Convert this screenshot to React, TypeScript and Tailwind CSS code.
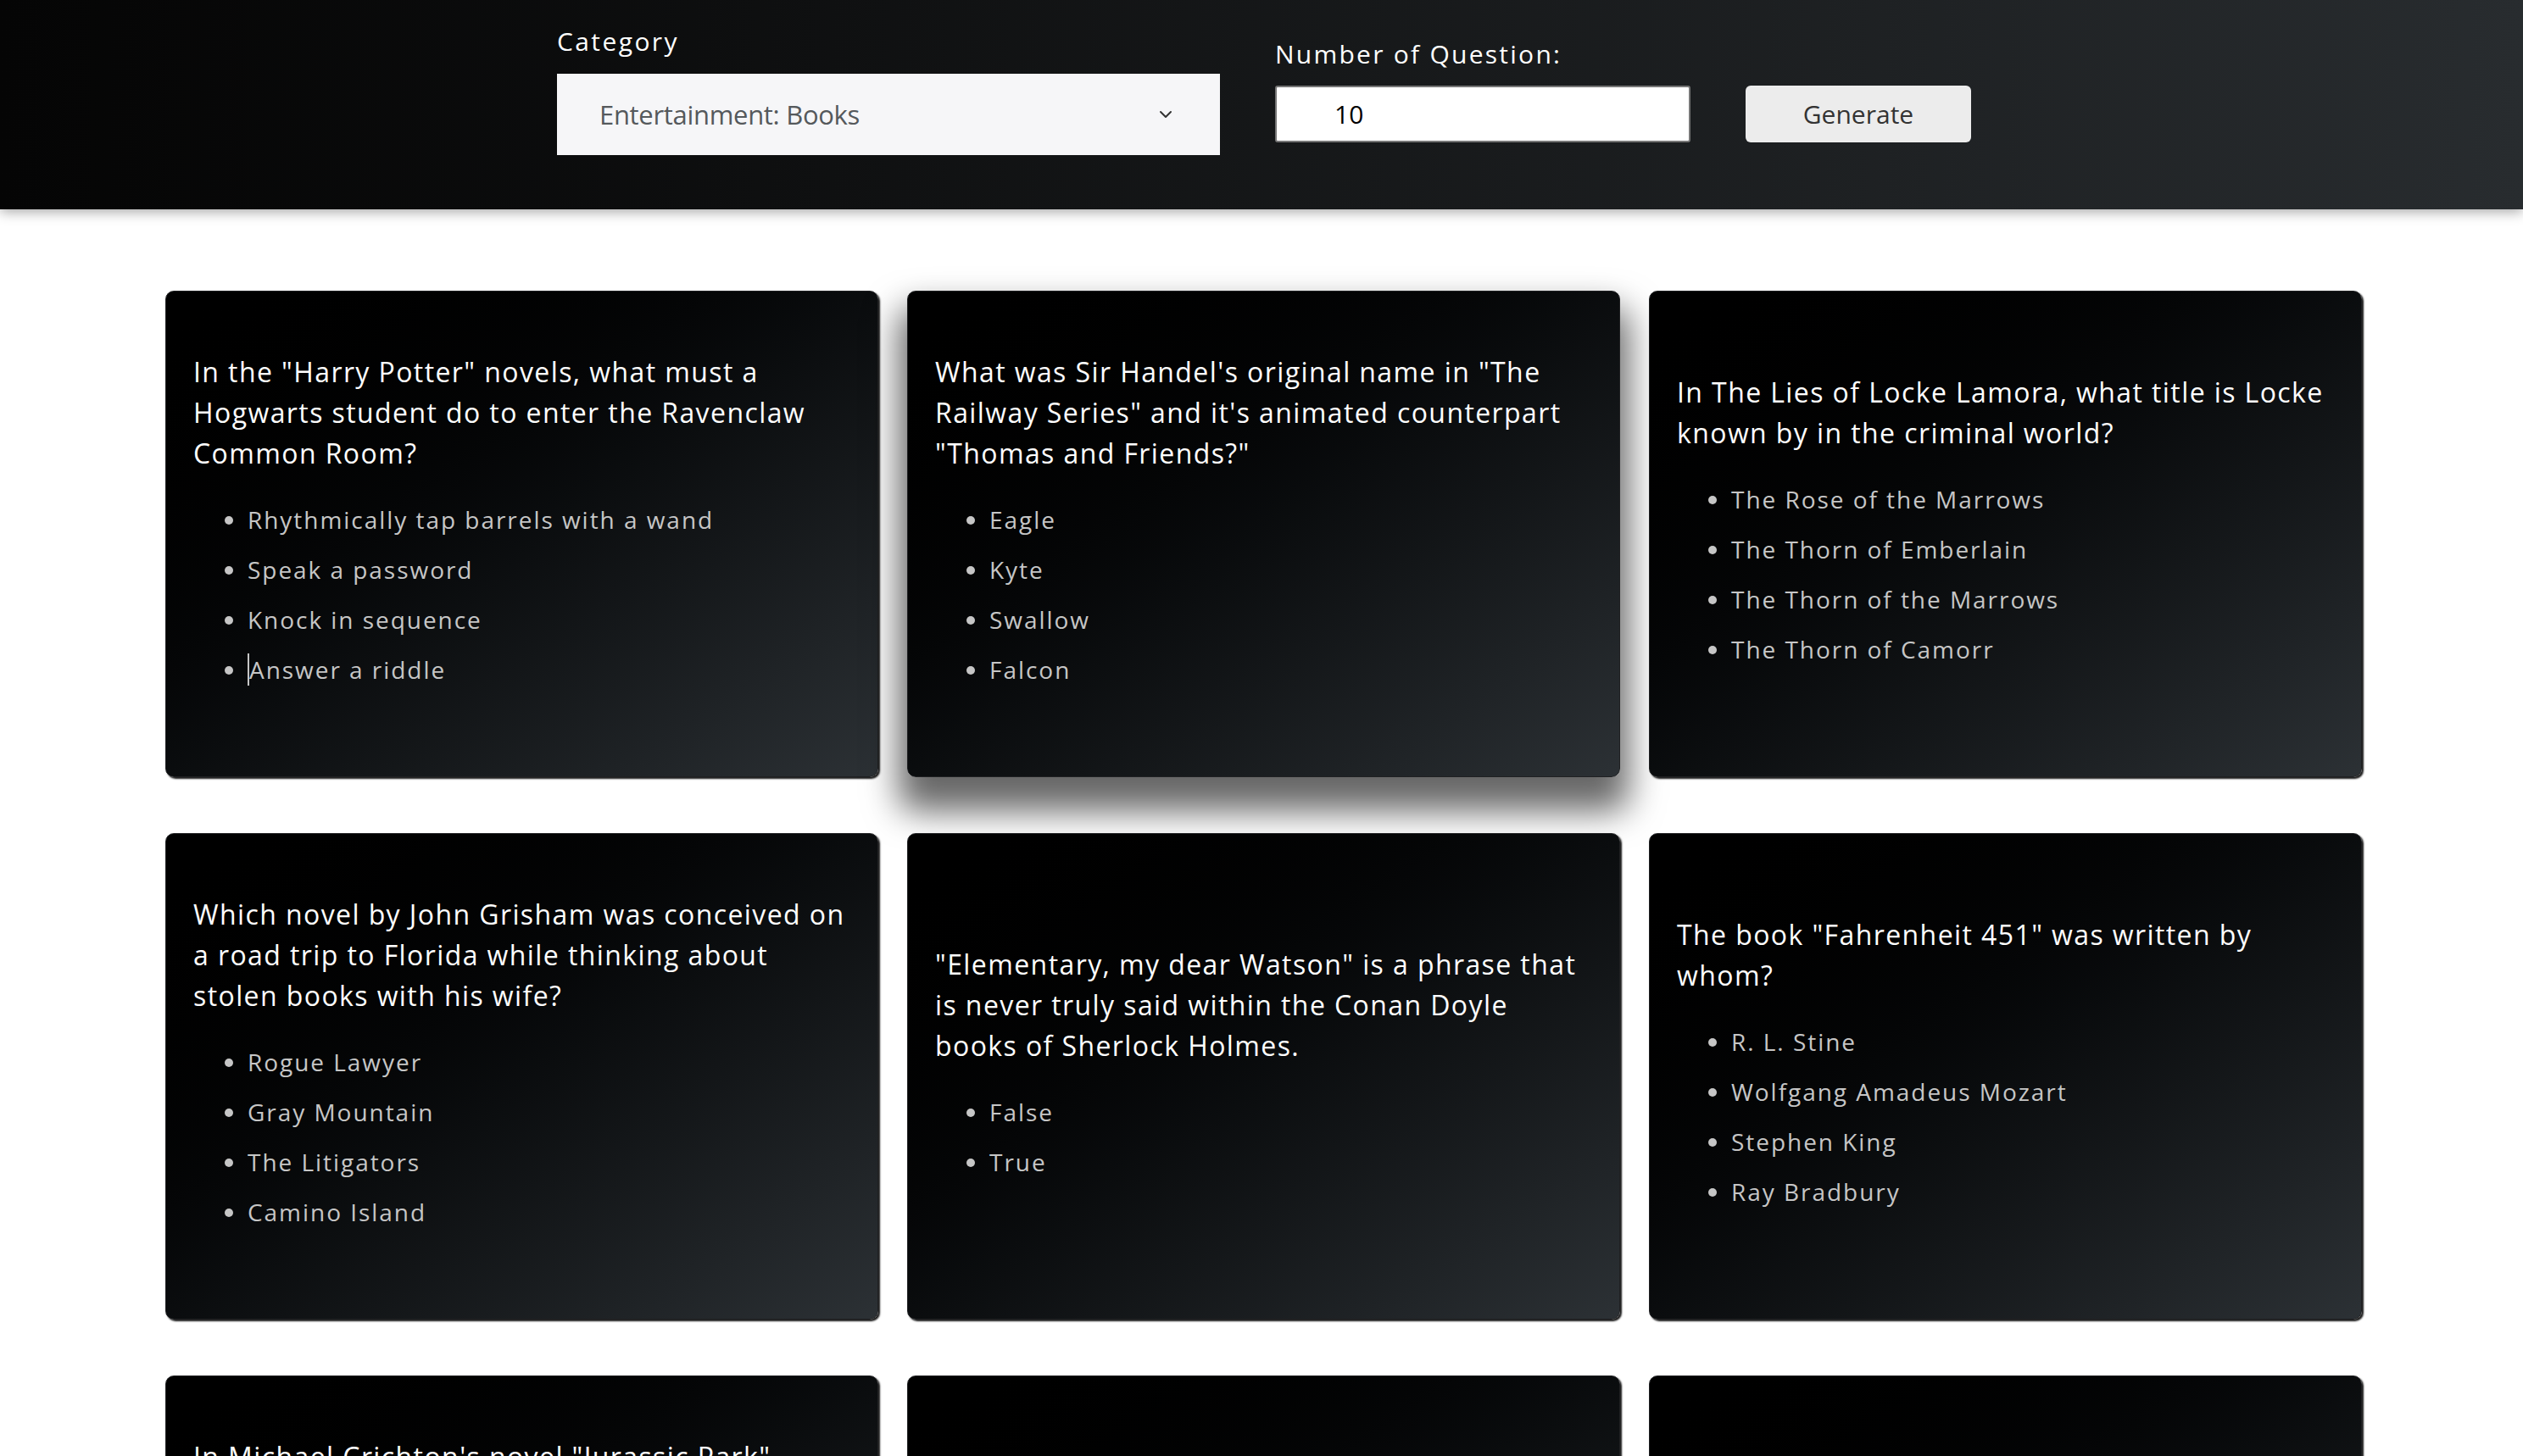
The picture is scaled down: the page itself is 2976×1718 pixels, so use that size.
import { ChevronDown } from "lucide-react"

type Question = {
  text: string
  answers: string[]
}

const QUESTIONS: Question[] = [
  {
    text: 'In the "Harry Potter" novels, what must a Hogwarts student do to enter the Ravenclaw Common Room?',
    answers: ["Rhythmically tap barrels with a wand", "Speak a password", "Knock in sequence", "Answer a riddle"],
  },
  {
    text: 'What was Sir Handel\'s original name in "The Railway Series" and it\'s animated counterpart "Thomas and Friends?"',
    answers: ["Eagle", "Kyte", "Swallow", "Falcon"],
  },
  {
    text: "In The Lies of Locke Lamora, what title is Locke known by in the criminal world?",
    answers: ["The Rose of the Marrows", "The Thorn of Emberlain", "The Thorn of the Marrows", "The Thorn of Camorr"],
  },
  {
    text: "Which novel by John Grisham was conceived on a road trip to Florida while thinking about stolen books with his wife?",
    answers: ["Rogue Lawyer", "Gray Mountain", "The Litigators", "Camino Island"],
  },
  {
    text: '"Elementary, my dear Watson" is a phrase that is never truly said within the Conan Doyle books of Sherlock Holmes.',
    answers: ["False", "True"],
  },
  {
    text: 'The book "Fahrenheit 451" was written by whom?',
    answers: ["R. L. Stine", "Wolfgang Amadeus Mozart", "Stephen King", "Ray Bradbury"],
  },
  {
    text: 'In Michael Crichton\'s novel "Jurassic Park" Dennis Nedry meets his demise at the claws of which dinosaur?',
    answers: ["Procompsognathus", "Velociraptor", "Tyrannosaurus Rex", "Dilophosaurus"],
  },
  {
    text: 'George Orwell wrote the book, "Brave New World".',
    answers: ["True", "False"],
  },
  {
    text: "Harry Potter was born on July 31st, 1980.",
    answers: ["False", "True"],
  },
]

export default function App() {
  return (
    <div className="min-h-screen bg-white font-['Open_Sans',sans-serif]">
      <header className="h-[247px] bg-linear-to-r from-[#050505] to-[#282c2f] pl-[657px] pt-[26px] shadow-[0_3px_14px_rgba(0,0,0,0.35)]">
        <div className="flex items-center gap-[65px]">
          <div className="flex flex-col">
            <label className="text-[30px] leading-[45px] tracking-[0.08em] text-white">Category</label>
            <div className="mt-[16px] flex h-[96px] w-[782px] items-center justify-between bg-[#f6f6f8] pl-[50px] pr-[52px]">
              <span className="text-[31px] tracking-[-0.01em] text-[#55595c]">Entertainment: Books</span>
              <ChevronDown className="h-[24px] w-[24px] text-[#333]" strokeWidth={2} />
            </div>
          </div>
          <div className="flex flex-col">
            <label className="text-[30px] leading-[45px] tracking-[0.075em] text-white">Number of Question:</label>
            <div className="mt-[15px] flex items-center gap-[65px]">
              <div className="flex h-[67px] w-[490px] items-center rounded-[3px] border-2 border-[#767676] bg-white pl-[68px]">
                <span className="text-[30px] text-black">10</span>
              </div>
              <button className="h-[67px] w-[266px] rounded-[6px] bg-[#ececec] text-[30px] text-[#333]">
                Generate
              </button>
            </div>
          </div>
        </div>
      </header>

      <main className="ml-[195px] grid w-[2591px] grid-cols-3 gap-x-[34px] gap-y-[66px] pt-[96px] pb-[80px]">
        {QUESTIONS.map((q, i) => (
          <QuestionCard key={i} question={q} raised={i === 1} caret={i === 0} />
        ))}
      </main>
    </div>
  )
}

function QuestionCard({
  question,
  raised,
  caret,
}: {
  question: Question
  raised: boolean
  caret: boolean
}) {
  return (
    <div
      className={
        "flex h-[574px] flex-col justify-center rounded-[10px] border border-[#1f2022] bg-linear-to-br from-black to-[#2c3135] px-[32px] pb-[26px] " +
        (raised
          ? "shadow-[0_30px_40px_10px_rgba(0,0,0,0.6)]"
          : "shadow-[2px_2px_2px_rgba(0,0,0,0.9)]")
      }
    >
      <p className="text-[32px] leading-[48px] tracking-[0.044em] text-white">{question.text}</p>
      <ul className="mt-[25px] list-disc pl-[64px] text-[28px] leading-[59px] tracking-[0.07em] text-[#c6c6c6] marker:text-[#c6c6c6]">
        {question.answers.map((a, j) => (
          <li key={j}>
            {caret && j === question.answers.length - 1 ? (
              <span className="border-l-2 border-[#c6c6c6]">{a}</span>
            ) : (
              a
            )}
          </li>
        ))}
      </ul>
    </div>
  )
}
